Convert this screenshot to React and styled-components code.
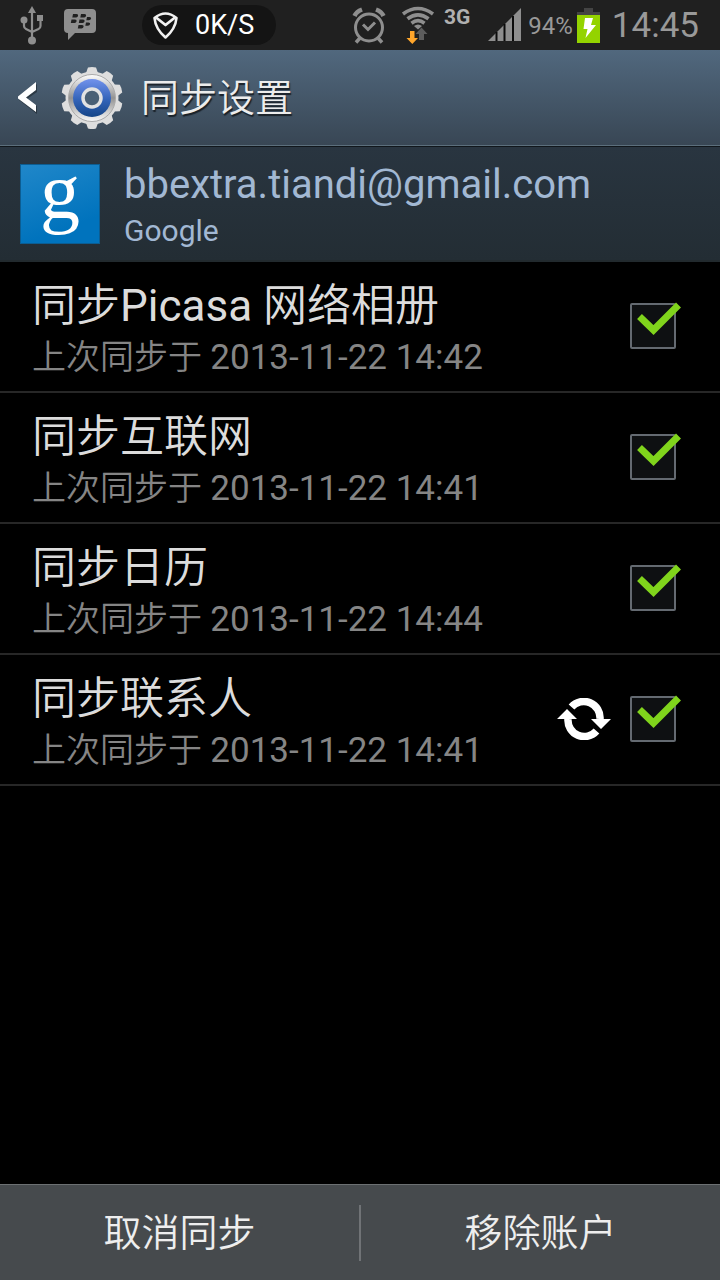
import React, { useState } from 'react';
import styled, { createGlobalStyle } from 'styled-components';

const GlobalStyle = createGlobalStyle`
  * {
    box-sizing: border-box;
  }

  body {
    margin: 0;
    background: #000;
    font-family: Roboto, 'Noto Sans CJK SC', sans-serif;
  }
`;

const Screen = styled.div`
  display: flex;
  flex-direction: column;
  min-height: 100vh;
  background: #000;
`;

const StatusBar = styled.div`
  display: flex;
  align-items: center;
  justify-content: space-between;
  height: 50px;
  padding: 0 21px 0 20px;
  background: #202020;
  color: #999;
`;

const StatusGroup = styled.div`
  display: flex;
  align-items: center;
`;

const StatusIcon = styled.svg`
  display: block;
  flex: none;
  margin-right: ${({ $gap }) => $gap || 0}px;
`;

const SpeedPill = styled.div`
  display: flex;
  align-items: center;
  gap: 16px;
  height: 40px;
  padding: 0 22px 0 10px;
  border-radius: 20px;
  background: #141414;
  color: #fff;
  font-size: 27px;
`;

const NetworkType = styled.span`
  align-self: flex-start;
  margin: 0 18px 0 0;
  color: #b0b0b0;
  font-size: 21px;
  font-weight: 700;
  line-height: 24px;
`;

const BatteryLevel = styled.span`
  margin: 2px 4px 0 6px;
  font-size: 24px;
`;

const Clock = styled.span`
  margin-left: 12px;
  font-size: 35px;
`;

const TitleBar = styled.header`
  display: flex;
  align-items: center;
  height: 97px;
  padding: 0 18px;
  border-bottom: 1px solid #11171c;
  background: linear-gradient(#51687e, #384654);
  box-shadow: inset 0 -1px #5c6f7c;
`;

const BackButton = styled.button`
  display: flex;
  align-items: center;
  gap: 22px;
  padding: 0;
  border: 0;
  background: none;
`;

const Title = styled.h1`
  margin: 0 0 0 18px;
  color: #ececec;
  font-size: 38px;
  font-weight: 350;
  line-height: 56px;
  text-shadow: 1px 2px 1px #1a2128;
`;

const Account = styled.section`
  display: flex;
  align-items: center;
  gap: 24px;
  height: 115px;
  padding: 0 20px;
  border-bottom: 2px solid #222a2e;
  background: linear-gradient(#293540, #232d34);
  color: #a2b8d3;
`;

const AccountLogo = styled.div`
  width: 80px;
  height: 80px;
  border: 1px solid #0c5d92;
  background: linear-gradient(160deg, #2087c9, #0073bd 75%);
  color: #fff;
  font-family: 'Liberation Serif', serif;
  font-size: 80px;
  line-height: 52px;
  text-align: center;
`;

const AccountText = styled.div`
  padding-top: 6px;
`;

const AccountName = styled.div`
  font-size: 40px;
  line-height: 48px;
`;

const AccountType = styled.div`
  font-size: 30px;
  line-height: 44px;
`;

const SyncList = styled.ul`
  flex: 1;
  margin: 0;
  padding: 0;
  list-style: none;
`;

const SyncRow = styled.li`
  border-bottom: 2px solid #272727;
`;

const SyncLabel = styled.label`
  display: flex;
  align-items: center;
  height: 129px;
  padding: 0 44px 2px 32px;
`;

const SyncText = styled.span`
  display: flex;
  flex: 1;
  flex-direction: column;
  padding-top: 8px;
`;

const SyncTitle = styled.span`
  color: #dcdcdc;
  font-size: 44px;
  font-weight: 350;
  line-height: 56px;
`;

const SyncTime = styled.span`
  color: #858585;
  font-size: 34px;
  font-weight: 350;
  line-height: 46px;
`;

const Latin = styled.span`
  font-weight: 400;
`;

const Timestamp = styled.time`
  font-size: 35px;
  font-weight: 400;
`;

const CheckWrap = styled.span`
  position: relative;
  width: 46px;
  height: 46px;
  margin-left: 19px;
`;

const CheckBox = styled.input`
  appearance: none;
  display: block;
  width: 46px;
  height: 46px;
  margin: 0;
  border: 2px solid #646a71;
  border-radius: 2px;
  background: #0e1012;
`;

const CheckMark = styled.svg`
  position: absolute;
  top: -1px;
  left: 6px;
  pointer-events: none;
`;

const ButtonBar = styled.footer`
  display: flex;
  align-items: center;
  height: 96px;
  border-top: 1px solid #6c7072;
  background: #464a4d;
`;

const BarButton = styled.button`
  flex: 1;
  height: 56px;
  padding: 0;
  border: 0;
  background: none;
  color: #eee;
  font-family: inherit;
  font-size: 38px;
  font-weight: 350;
  line-height: 56px;

  &:not(:last-child) {
    border-right: 2px solid #707376;
  }
`;

const syncItems = [
  { id: 'picasa', name: ['同步', 'Picasa ', '网络相册'], time: '2013-11-22 14:42' },
  { id: 'internet', name: ['同步互联网'], time: '2013-11-22 14:41' },
  { id: 'calendar', name: ['同步日历'], time: '2013-11-22 14:44' },
  { id: 'contacts', name: ['同步联系人'], time: '2013-11-22 14:41', syncing: true },
];

const UsbIcon = () => (
  <StatusIcon $gap={20} width="24" height="40" viewBox="0 0 24 40" fill="#8e8e8e">
    <path d="M12 1l4 7H8z" />
    <circle cx="12" cy="35.500" r="4" />
    <circle cx="4" cy="15" r="3.500" />
    <path d="M17 10h6v6h-6z" />
    <path d="M12 6v28M4 15v6q0 2 2 3l6 3M20.500 14v7q0 2-2 3L12 27" fill="none" stroke="#8e8e8e" strokeWidth="2.200" />
  </StatusIcon>
);

const MessengerIcon = () => (
  <StatusIcon $gap={46} width="32" height="34" viewBox="0 0 32 34">
    <path d="M4 1h24q4 0 4 4v16q0 4-4 4H11l-7 7v-7q-4 0-4-4V5q0-4 4-4z" fill="#8e8e8e" />
    <g fill="#202020">
      <path d="M9 6h3.500q2 0 1.600 1.800T12 9.500H8.300zM17 6h3.500q2 0 1.600 1.800T20 9.500h-3.700z" />
      <path d="M7.500 11.500H11q2 0 1.600 1.800T10.500 15H6.800zM15.500 11.500H19q2 0 1.600 1.800T18.500 15h-3.700zM23 9h2.500q2 0 1.600 1.600T25 12.200h-2.700zM22 14.500h2.500q2 0 1.600 1.600T24 17.700h-2.700zM14.500 17H18q2 0 1.600 1.700t-2.100 1.700h-3.700z" />
    </g>
  </StatusIcon>
);

const ShieldIcon = () => (
  <StatusIcon width="27" height="28" viewBox="0 0 27 28" fill="none" stroke="#f2f2f2" strokeLinejoin="round">
    <path d="M2.500 7q11-9 22 0-1 11-11 19.500Q3.500 18 2.500 7z" strokeWidth="2.600" />
    <path d="M4 6.500l9.500 7.500L23 6.500" strokeWidth="2.800" />
  </StatusIcon>
);

const AlarmIcon = () => (
  <StatusIcon $gap={15} width="34" height="37" viewBox="0 0 34 37" fill="none" stroke="#8e8e8e">
    <circle cx="17" cy="20.500" r="13.500" strokeWidth="3" />
    <path d="M11 17.500l5 5 7-7" strokeWidth="3" />
    <path d="M2.500 9q2-4.500 7.500-6.500M31.500 9q-2-4.500-7.500-6.500" strokeWidth="4.500" />
    <path d="M8 31l-4 4.500M26 31l4 4.500" strokeWidth="3.500" />
  </StatusIcon>
);

const WifiIcon = () => (
  <StatusIcon $gap={9} width="34" height="38" viewBox="0 0 34 38">
    <g fill="none" stroke="#8e8e8e" strokeWidth="3.600">
      <path d="M2 8q15-11 30 0" />
      <path d="M6.500 12.800q10.500-8 21 0" />
      <path d="M10.500 17.200q6.500-5 13 0" />
    </g>
    <path d="M13 20q4-3 8 0l-4 3.500z" fill="#8e8e8e" />
    <path d="M9 25h4.500v7H17l-5.700 6-5.800-6H9z" fill="#ffa62b" />
    <path d="M18 34h5v-6h3.500l-6-6.500-6 6.500H18z" fill="#5c5c5c" />
  </StatusIcon>
);

const SignalIcon = () => (
  <StatusIcon width="34" height="34" viewBox="0 0 34 34">
    <path d="M0 33L33 0v33z" fill="#8e8e8e" />
    <path d="M8.500 24v9M16.500 16v17M25 8v25" stroke="#0b0b0b" strokeWidth="2" />
  </StatusIcon>
);

const BatteryIcon = () => (
  <StatusIcon width="23" height="35" viewBox="0 0 23 35">
    <path d="M7 0h9v4h7v3H0V4h7z" fill="#444" />
    <path d="M0 7h23v28H0z" fill="#94d300" />
    <path d="M8 10h8l-2 7h5L8.500 30l2-9H6.500z" fill="#fff" />
  </StatusIcon>
);

const teeth = [0, 36, 72, 108, 144, 180, 216, 252, 288, 324];

const GearIcon = () => (
  <svg width="62" height="64" viewBox="-31 -32 62 64">
    <defs>
      <linearGradient id="metal" x1="0" y1="0" x2="0" y2="1">
        <stop offset="0" stopColor="#fff" />
        <stop offset=".5" stopColor="#929292" />
        <stop offset="1" stopColor="#fafafa" />
      </linearGradient>
      <linearGradient id="blue" x1="0" y1="0" x2="0" y2="1">
        <stop offset="0" stopColor="#7292ec" />
        <stop offset=".55" stopColor="#3263b8" />
        <stop offset="1" stopColor="#164688" />
      </linearGradient>
    </defs>
    <g fill="#dedede">
      {teeth.map((angle) => (
        <path key={angle} d="M-6-25l2-5.500q4-1 8 0l2 5.500z" transform={`rotate(${angle})`} />
      ))}
      <circle r="26.500" />
    </g>
    <circle r="23.500" fill="url(#metal)" stroke="#aaa" strokeWidth="1" />
    <circle r="19" fill="url(#blue)" />
    <circle r="9" fill="#4a6075" stroke="#e2e2e2" strokeWidth="3.500" />
  </svg>
);

const BackIcon = () => (
  <svg width="21" height="32" viewBox="0 0 21 32">
    <path d="M19 2v8l-10 7 10 7v8L1 18v-2z" fill="#1b242c" opacity=".6" />
    <path d="M18 0v8L8 15.500 18 23v7L0 16.500v-2z" fill="#fff" />
  </svg>
);

const SyncIcon = () => (
  <svg width="54" height="42" viewBox="0 0 54 42" fill="none" stroke="#fff" strokeWidth="7.500">
    <path d="M14.500 9A16.300 16.300 0 0 1 43 21" />
    <path d="M39.500 33A16.300 16.300 0 0 1 11 21" />
    <path d="M34 21h20L44 31zM0 21h20L10 11z" fill="#fff" stroke="none" />
  </svg>
);

const SyncItem = ({ item }) => {
  const [checked, setChecked] = useState(true);
  const [prefix, latin, suffix] = item.name;

  return (
    <SyncRow>
      <SyncLabel>
        <SyncText>
          <SyncTitle>
            {prefix}
            {latin && <Latin>{latin}</Latin>}
            {suffix}
          </SyncTitle>
          <SyncTime>
            上次同步于 <Timestamp>{item.time}</Timestamp>
          </SyncTime>
        </SyncText>
        {item.syncing && <SyncIcon />}
        <CheckWrap>
          <CheckBox type="checkbox" checked={checked} onChange={() => setChecked(!checked)} />
          {checked && (
            <CheckMark width="46" height="34" viewBox="0 0 46 34">
              <path d="M3.500 14.500L17.500 28 42.500 3" fill="none" stroke="#80d41c" strokeWidth="7" />
            </CheckMark>
          )}
        </CheckWrap>
      </SyncLabel>
    </SyncRow>
  );
};

const App = () => (
  <>
    <GlobalStyle />
    <Screen>
      <StatusBar>
        <StatusGroup>
          <UsbIcon />
          <MessengerIcon />
          <SpeedPill>
            <ShieldIcon />
            0K/S
          </SpeedPill>
        </StatusGroup>
        <StatusGroup>
          <AlarmIcon />
          <WifiIcon />
          <NetworkType>3G</NetworkType>
          <SignalIcon />
          <BatteryLevel>94%</BatteryLevel>
          <BatteryIcon />
          <Clock>14:45</Clock>
        </StatusGroup>
      </StatusBar>
      <TitleBar>
        <BackButton type="button" aria-label="返回">
          <BackIcon />
          <GearIcon />
        </BackButton>
        <Title>同步设置</Title>
      </TitleBar>
      <Account>
        <AccountLogo>g</AccountLogo>
        <AccountText>
          <AccountName>bbextra.tiandi@gmail.com</AccountName>
          <AccountType>Google</AccountType>
        </AccountText>
      </Account>
      <SyncList>
        {syncItems.map((item) => (
          <SyncItem key={item.id} item={item} />
        ))}
      </SyncList>
      <ButtonBar>
        <BarButton type="button">取消同步</BarButton>
        <BarButton type="button">移除账户</BarButton>
      </ButtonBar>
    </Screen>
  </>
);

export default App;
